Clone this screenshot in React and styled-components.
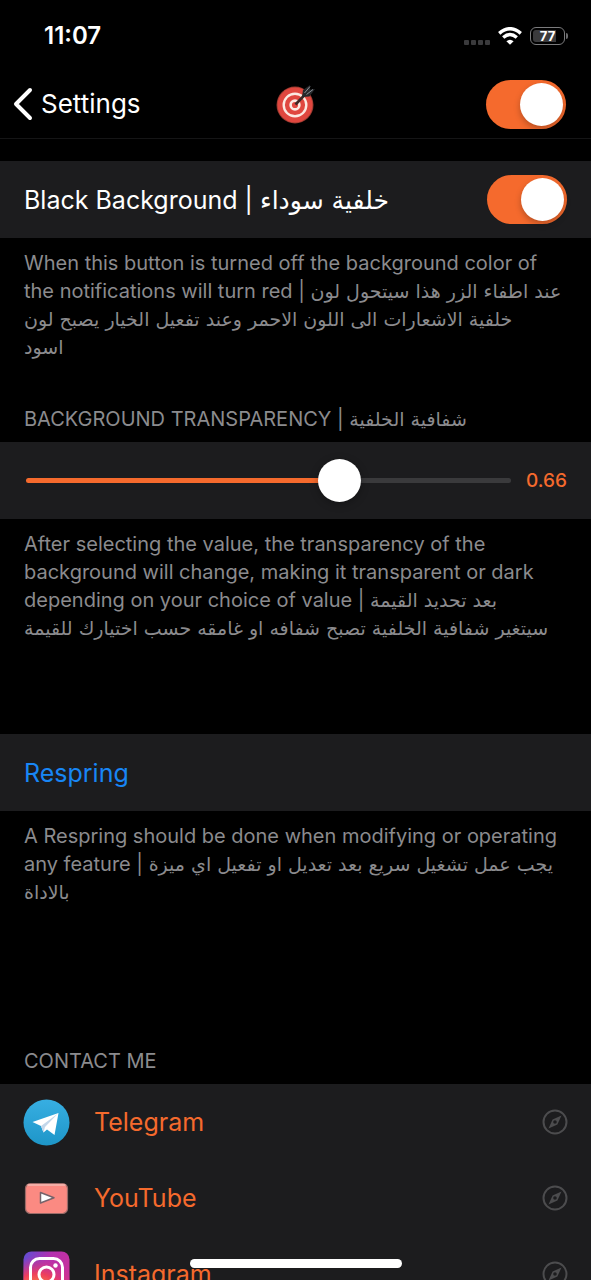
import React, { useState } from "react";
import styled, { createGlobalStyle } from "styled-components";

const accent = "#f56a2d";

const GlobalStyle = createGlobalStyle`
  *, *::before, *::after { box-sizing: border-box; }
  body {
    margin: 0;
    background: #000;
    color: #fff;
    font-family: Inter, "DejaVu Sans", sans-serif;
  }
`;

const Screen = styled.div`
  display: flex;
  flex-direction: column;
  height: 100vh;
  overflow: hidden;
`;

const StatusBar = styled.div`
  flex: none;
  display: flex;
  align-items: center;
  justify-content: space-between;
  height: 72px;
  padding: 0 26px 0 44px;
`;

const Time = styled.time`
  font-size: 24px;
  font-weight: 600;
  line-height: 28px;
`;

const StatusIcons = styled.div`
  display: flex;
  align-items: center;
  gap: 8px;
`;

const SignalDots = styled.div`
  display: flex;
  gap: 2px;
  padding-top: 12px;

  i {
    width: 5px;
    height: 5px;
    border-radius: 1px;
    background: #3a3a3c;
  }
`;

const Battery = styled.div`
  position: relative;
  display: flex;
  align-items: center;
  justify-content: center;
  width: 35px;
  height: 18px;
  border: 1px solid #7b7b7d;
  border-radius: 6px;
  background: linear-gradient(90deg, #3a3a3c 23px, transparent 23px) content-box;
  padding: 2px;
  font-size: 13px;
  font-weight: 700;
  line-height: 14px;

  &::after {
    content: "";
    position: absolute;
    top: 5px;
    right: -4px;
    width: 2px;
    height: 6px;
    border-radius: 0 2px 2px 0;
    background: #6b6b6d;
  }
`;

const NavBar = styled.header`
  flex: none;
  display: grid;
  grid-template-columns: 1fr auto 1fr;
  align-items: center;
  height: 67px;
  padding: 0 25px 2px 13px;
  border-bottom: 1px solid #151516;
`;

const BackButton = styled.button`
  justify-self: start;
  display: flex;
  align-items: center;
  gap: 8px;
  padding: 0;
  border: 0;
  background: none;
  color: #fff;
  font: inherit;
  font-size: 26px;
  line-height: 32px;
`;

const Title = styled.h1`
  display: flex;
  margin: 0 0 0 12px;
`;

const Switch = styled.input.attrs({ type: "checkbox", role: "switch" })`
  appearance: none;
  flex: none;
  justify-self: end;
  width: 80px;
  height: 49px;
  margin: 0;
  padding: 3px;
  border-radius: 25px;
  background: #39393d;

  &::before {
    content: "";
    display: block;
    width: 43px;
    height: 43px;
    border-radius: 50%;
    background: #fff;
    box-shadow: 0 3px 6px rgba(0, 0, 0, 0.25);
  }
  &:checked { background: ${accent}; }
  &:checked::before { margin-left: auto; }
`;

const Content = styled.main`
  flex: 1;
  min-height: 0;
  overflow-y: auto;
  scrollbar-width: none;
  padding-top: 22px;
`;

const Section = styled.section`
  padding-bottom: ${(p) => p.$space || 0}px;
`;

const SectionTitle = styled.h2`
  margin: 0;
  padding: 0 24px 9px;
  color: #8b8b8e;
  font-size: 20px;
  font-weight: 400;
  line-height: 28px;
`;

const Row = styled.div`
  display: flex;
  align-items: center;
  justify-content: space-between;
  gap: 15px;
  height: 77px;
  padding: 0 24px;
  background: #1c1c1e;
`;

const RowLabel = styled.label`
  font-size: 25px;
  line-height: 32px;
`;

const ActionButton = styled.button`
  flex: 1;
  padding: 0;
  border: 0;
  background: none;
  color: #1886f5;
  font: inherit;
  font-size: 25px;
  line-height: 32px;
  text-align: left;
`;

const Note = styled.p`
  margin: 0;
  padding: 11px 20px 0 24px;
  color: #8b8b8e;
  font-size: 20px;
  line-height: 28px;
`;

const Arabic = styled.span`
  font-family: "DejaVu Sans", sans-serif;
  font-size: ${(p) => (p.$large ? 25 : 19)}px;
  line-height: 1;
`;

const Slider = styled.input.attrs({ type: "range" })`
  appearance: none;
  flex: 1;
  min-width: 0;
  height: 43px;
  margin: 0 0 0 2px;
  background: none;

  &::-webkit-slider-runnable-track {
    height: 5px;
    border-radius: 3px;
    background: linear-gradient(90deg, ${accent} var(--fill), #3a3a3c var(--fill));
  }
  &::-webkit-slider-thumb {
    appearance: none;
    width: 43px;
    height: 43px;
    margin-top: -19px;
    border-radius: 50%;
    background: #fff;
    box-shadow: 0 2px 8px rgba(0, 0, 0, 0.3);
  }
`;

const SliderValue = styled.output`
  color: ${accent};
  font-size: 19px;
  font-weight: 500;
  line-height: 24px;
`;

const LinkList = styled.ul`
  margin: 0;
  padding: 0;
  list-style: none;
  background: #1c1c1e;
`;

const ContactLink = styled.a`
  display: flex;
  align-items: center;
  gap: 24px;
  height: 76px;
  padding: 0 23px;
  color: ${accent};
  font-size: 25px;
  line-height: 32px;
  text-decoration: none;

  svg:last-child { margin-left: auto; }
`;

const HomeIndicator = styled.div`
  position: fixed;
  bottom: 12px;
  left: 50%;
  width: 212px;
  height: 9px;
  margin-left: -106px;
  border-radius: 5px;
  background: #fff;
`;

const WifiIcon = () => (
  <svg width="24" height="18" viewBox="0 0 24 18" fill="none" stroke="#fff" strokeWidth="3.4" aria-hidden="true">
    <path d="M1.2 6.4 Q12 -3 22.8 6.4" />
    <path d="M5.2 10.6 Q12 4.6 18.8 10.6" />
    <path d="M12 17.8 L8.4 14.2 Q12 11.2 15.6 14.2 Z" fill="#fff" stroke="none" />
  </svg>
);

const ChevronIcon = () => (
  <svg width="20" height="34" viewBox="0 0 20 34" fill="none" stroke="#fff" strokeWidth="4" strokeLinecap="round" strokeLinejoin="round" aria-hidden="true">
    <path d="M17 3 L3 17 L17 31" />
  </svg>
);

const TargetIcon = () => (
  <svg width="40" height="40" viewBox="0 0 40 40" fill="none" role="img" aria-label="Target">
    <circle cx="19" cy="21" r="18.5" fill="#9b3a30" />
    <circle cx="19" cy="21" r="17.5" fill="#e0473f" />
    <circle cx="19" cy="21" r="11.3" stroke="#fbe9e2" strokeWidth="2.4" />
    <circle cx="19" cy="21" r="4.4" stroke="#fbe9e2" strokeWidth="2.6" />
    <path d="M19.5 20.5 L31 8.5" stroke="#3d2725" strokeWidth="2.6" />
    <path d="M26 13 L27 6 L34 1 L34 5.5 L39 5 L33.5 12.500 Z" fill="#26282b" />
    <path d="M28.5 9 L34 2.5 M30.5 10.5 L37 5.5" stroke="#8b9198" strokeWidth="1" />
  </svg>
);

const TelegramIcon = () => (
  <svg width="47" height="47" viewBox="0 0 47 47" aria-hidden="true">
    <defs>
      <linearGradient id="telegram" x1="0" y1="0" x2="0" y2="1">
        <stop offset="0" stopColor="#37aee2" />
        <stop offset="1" stopColor="#1e96c8" />
      </linearGradient>
    </defs>
    <circle cx="23.5" cy="23.5" r="23" fill="url(#telegram)" />
    <path d="M9.5 23 L35.5 14 L31.5 36 L24 30.5 L20.5 33.5 L18 27 Z" fill="#fff" />
    <path d="M18 27 L35 14.5 L22 28 L20.5 33.5 Z" fill="#c3d7ea" />
  </svg>
);

const YouTubeIcon = () => (
  <svg width="47" height="47" viewBox="0 0 47 47" aria-hidden="true">
    <rect x="2.5" y="8.5" width="42" height="30" rx="5" fill="#fb8a82" stroke="#9b6b68" strokeWidth="1.2" />
    <path d="M5 10 H42" stroke="#f3b9b3" strokeWidth="1.5" strokeLinecap="round" />
    <path d="M17.500 17.5 L31 22.7 L17.5 28 Z" fill="#fff" stroke="#76636a" strokeWidth="1.5" strokeLinejoin="round" />
  </svg>
);

const InstagramIcon = () => (
  <svg width="47" height="47" viewBox="0 0 47 47" fill="none" aria-hidden="true">
    <defs>
      <linearGradient id="insta-base" x1="0" y1="0" x2="1" y2="0.5">
        <stop offset="0" stopColor="#5b4fd6" />
        <stop offset="0.5" stopColor="#b331b0" />
        <stop offset="1" stopColor="#c9309a" />
      </linearGradient>
      <radialGradient id="insta-glow" cx="0.3" cy="1.05" r="0.95">
        <stop offset="0" stopColor="#fed858" />
        <stop offset="0.3" stopColor="#fb8a3c" />
        <stop offset="0.6" stopColor="#ee3f5c" />
        <stop offset="1" stopColor="#c9309a" stopOpacity="0" />
      </radialGradient>
    </defs>
    <rect x="0.5" y="0.5" width="46" height="46" rx="8" fill="url(#insta-base)" />
    <rect x="0.5" y="0.5" width="46" height="46" rx="8" fill="url(#insta-glow)" />
    <rect x="7.5" y="7.5" width="32" height="32" rx="9" stroke="#fff" strokeWidth="3" />
    <circle cx="23.5" cy="23.5" r="7.5" stroke="#fff" strokeWidth="3" />
    <circle cx="32.5" cy="14.5" r="2.2" fill="#fff" />
  </svg>
);

const CompassIcon = () => (
  <svg width="26" height="26" viewBox="0 0 26 26" fill="none" aria-hidden="true">
    <circle cx="13" cy="13" r="11.5" stroke="#4c4c4e" strokeWidth="2" />
    <path fillRule="evenodd" d="M19.5 6.5 L15.4 15.4 L6.5 19.5 L10.6 10.6 Z M13 11.2 A1.8 1.8 0 1 0 13 14.8 A1.8 1.8 0 1 0 13 11.2 Z" fill="#4c4c4e" />
  </svg>
);

const contacts = [
  { name: "Telegram", Icon: TelegramIcon },
  { name: "YouTube", Icon: YouTubeIcon },
  { name: "Instagram", Icon: InstagramIcon },
];

export default function App() {
  const [value, setValue] = useState(0.66);

  return (
    <Screen>
      <GlobalStyle />
      <StatusBar>
        <Time>11:07</Time>
        <StatusIcons>
          <SignalDots><i /><i /><i /><i /></SignalDots>
          <WifiIcon />
          <Battery>77</Battery>
        </StatusIcons>
      </StatusBar>
      <NavBar>
        <BackButton type="button"><ChevronIcon />Settings</BackButton>
        <Title><TargetIcon /></Title>
        <Switch aria-label="Enabled" defaultChecked />
      </NavBar>
      <Content>
        <Section $space={44}>
          <Row>
            <RowLabel htmlFor="black-background">
              Black Background | <Arabic $large lang="ar">خلفية سوداء</Arabic>
            </RowLabel>
            <Switch id="black-background" defaultChecked />
          </Row>
          <Note>
            When this button is turned off the background color of
            the notifications will turn red |{" "}
            <Arabic lang="ar">عند اطفاء الزر هذا سيتحول لون</Arabic>
            <br />
            <Arabic lang="ar">خلفية الاشعارات الى اللون الاحمر وعند تفعيل الخيار يصبح لون</Arabic>
            <br />
            <Arabic lang="ar">اسود</Arabic>
          </Note>
        </Section>

        <Section $space={92}>
          <SectionTitle id="transparency">
            BACKGROUND TRANSPARENCY | <Arabic lang="ar">شفافية الخلفية</Arabic>
          </SectionTitle>
          <Row>
            <Slider
              min="0"
              max="1"
              step="0.01"
              value={value}
              aria-labelledby="transparency"
              onChange={(e) => setValue(Number(e.target.value))}
              style={{ "--fill": `${value * 100}%` }}
            />
            <SliderValue>{value.toFixed(2)}</SliderValue>
          </Row>
          <Note>
            After selecting the value, the transparency of the
            background will change, making it transparent or dark
            depending on your choice of value |{" "}
            <Arabic lang="ar">بعد تحديد القيمة</Arabic>
            <br />
            <Arabic lang="ar">سيتغير شفافية الخلفية تصبح شفافه او غامقه حسب اختيارك للقيمة</Arabic>
          </Note>
        </Section>

        <Section $space={141}>
          <Row>
            <ActionButton type="button">Respring</ActionButton>
          </Row>
          <Note>
            A Respring should be done when modifying or operating
            any feature |{" "}
            <Arabic lang="ar">يجب عمل تشغيل سريع بعد تعديل او تفعيل اي ميزة</Arabic>
            <br />
            <Arabic lang="ar">بالاداة</Arabic>
          </Note>
        </Section>

        <Section>
          <SectionTitle>CONTACT ME</SectionTitle>
          <LinkList>
            {contacts.map(({ name, Icon }) => (
              <li key={name}>
                <ContactLink href={`#${name.toLowerCase()}`}>
                  <Icon />
                  {name}
                  <CompassIcon />
                </ContactLink>
              </li>
            ))}
          </LinkList>
        </Section>
      </Content>
      <HomeIndicator />
    </Screen>
  );
}
